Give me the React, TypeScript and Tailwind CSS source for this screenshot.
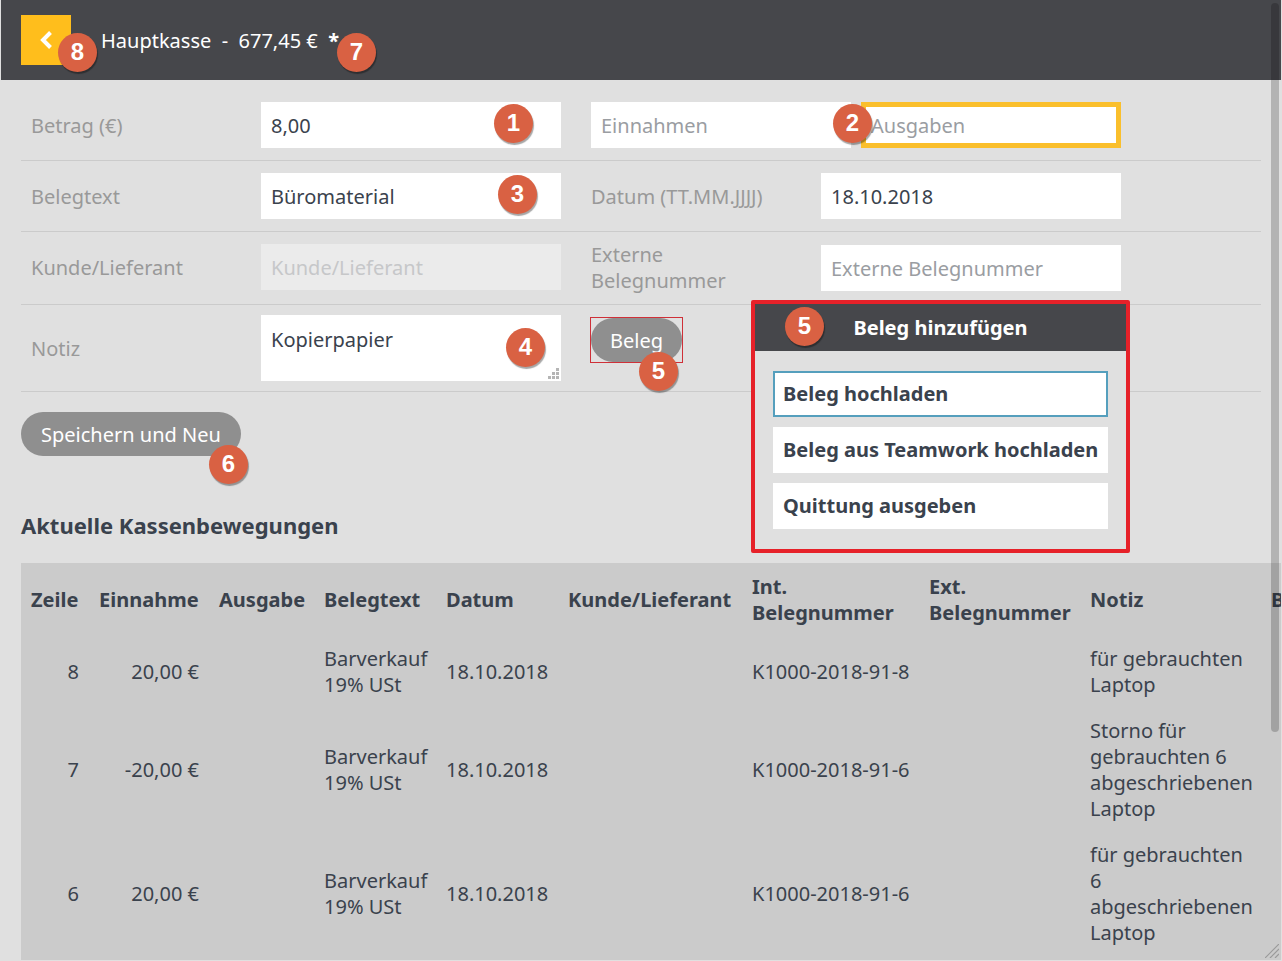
import type { ReactNode } from "react";

function Badge({ n, className }: { n: number; className: string }) {
  return (
    <span
      className={
        "pointer-events-none absolute z-20 flex size-[39px] items-center justify-center rounded-full bg-[#d96143] pb-0.5 font-['Liberation_Sans',sans-serif] text-[24px] leading-6 font-bold text-white shadow-[1px_2px_1px_rgba(0,0,0,0.35)] " +
        className
      }
    >
      {n}
    </span>
  );
}

function Row({ children }: { children: ReactNode }) {
  return (
    <div className="flex items-center border-b border-[#cbcbcb] py-2.5 pl-2.5">{children}</div>
  );
}

const label = "w-[230px] shrink-0 pt-0.5 text-[#999999]";
const field =
  "block h-[46px] w-full bg-white px-2.5 text-[20px] text-[#3a424d] outline-none placeholder:text-[#9a9da2]";
const pill = "block h-11 rounded-full bg-[#8f8f8f] pt-0.5 text-white";

const rows = [
  { zeile: "8", ein: "20,00 €", text: "Barverkauf 19% USt", datum: "18.10.2018", int: "K1000-2018-91-8", notiz: "für gebrauchten Laptop" },
  { zeile: "7", ein: "-20,00 €", text: "Barverkauf 19% USt", datum: "18.10.2018", int: "K1000-2018-91-6", notiz: "Storno für gebrauchten 6 abgeschriebenen Laptop" },
  { zeile: "6", ein: "20,00 €", text: "Barverkauf 19% USt", datum: "18.10.2018", int: "K1000-2018-91-6", notiz: "für gebrauchten 6 abgeschriebenen Laptop" },
];

const th = "px-2.5 pt-[11px] pb-[9px] text-left font-bold";
const td = "px-2.5 pt-[11px] pb-[9px]";

function UploadDialog() {
  return (
    <section
      aria-labelledby="dlg"
      className="absolute top-[220px] left-[750px] z-10 w-[379px] rounded-[2px] border-4 border-[#e62129] bg-[#e0e0e0] pb-5"
    >
      <header className="relative flex h-[47px] items-center justify-center bg-[#46474b] text-white">
        <Badge n={5} className="top-[3px] left-[30px]" />
        <h2 id="dlg" className="font-bold">Beleg hinzufügen</h2>
      </header>
      <div className="flex flex-col gap-2.5 px-[18px] pt-5 font-bold">
        <button className="h-[46px] border-2 border-[#559fbd] bg-white px-2 text-left">Beleg hochladen</button>
        <button className="h-[46px] bg-white px-2.5 text-left whitespace-nowrap">Beleg aus Teamwork hochladen</button>
        <button className="h-[46px] bg-white px-2.5 text-left">Quittung ausgeben</button>
      </div>
    </section>
  );
}

export default function App() {
  return (
    <div className="relative flex h-screen flex-col overflow-hidden border-x border-b border-[#e0e0e0] bg-[#e0e0e0] font-['Noto_Sans',sans-serif] text-[20px] leading-[26px] text-[#3a424d]">
      <header className="flex h-20 shrink-0 items-center bg-[#46474b] pl-5 text-white">
        <div className="relative">
          <button aria-label="Zurück" className="flex size-[50px] items-center justify-center bg-[#ffbe1c]">
            <svg viewBox="0 0 12 18" className="h-[18px] w-3" fill="none" stroke="white" strokeWidth="4">
              <path d="M10.5 1.5 3 9l7.5 7.5" />
            </svg>
          </button>
          <Badge n={8} className="top-[18px] left-[37px]" />
        </div>
        <h1 className="relative ml-[30px] pt-0.5 whitespace-pre">
          Hauptkasse{"  -  "}677,45 €{"  "}
          <b>*</b>
          <Badge n={7} className="top-[7px] -right-[37px]" />
        </h1>
      </header>

      <main className="relative flex min-h-0 flex-1 flex-col pt-2.5 pl-5">
        <form className="mr-5 shrink-0">
          <Row>
            <label htmlFor="betrag" className={label}>Betrag (€)</label>
            <div className="relative my-0.5 w-[300px]">
              <input id="betrag" defaultValue="8,00" className={field} />
              <Badge n={1} className="top-0.5 right-7" />
            </div>
            <div className="ml-[30px] w-[260px]">
              <input aria-label="Einnahmen" placeholder="Einnahmen" className={field} />
            </div>
            <div className="relative ml-2.5 w-[260px]">
              <input
                aria-label="Ausgaben"
                placeholder="Ausgaben"
                className="block h-[46px] w-full border-5 border-[#fabf2c] bg-white px-[5px] text-[20px] outline-none placeholder:text-[#9a9da2]"
              />
              <Badge n={2} className="top-0.5 -left-7" />
            </div>
          </Row>
          <Row>
            <label htmlFor="text" className={label}>Belegtext</label>
            <div className="relative my-0.5 w-[300px]">
              <input id="text" defaultValue="Büromaterial" className={field} />
              <Badge n={3} className="top-0.5 right-6" />
            </div>
            <label htmlFor="datum" className={label + " ml-[30px]"}>Datum (TT.MM.JJJJ)</label>
            <div className="w-[300px]">
              <input id="datum" defaultValue="18.10.2018" className={field} />
            </div>
          </Row>
          <Row>
            <label htmlFor="kunde" className="w-[230px] shrink-0 text-[#999999]">Kunde/Lieferant</label>
            <div className="w-[300px] pb-0.5">
              <input
                id="kunde"
                disabled
                placeholder="Kunde/Lieferant"
                className="block h-[46px] w-full bg-[#ebebeb] px-2.5 text-[20px] placeholder:text-[#c6c7c9]"
              />
            </div>
            <label htmlFor="extern" className="ml-[30px] w-[230px] shrink-0 pr-16 text-[#999999]">Externe Belegnummer</label>
            <div className="w-[300px]">
              <input id="extern" placeholder="Externe Belegnummer" className={field} />
            </div>
          </Row>
          <Row>
            <label htmlFor="notiz" className={label}>Notiz</label>
            <div className="relative w-[300px]">
              <textarea
                id="notiz"
                defaultValue="Kopierpapier"
                className="block h-[66px] w-full resize-none bg-white px-2.5 py-3 text-[20px] leading-[26px] outline-none"
              />
              <svg viewBox="0 0 11 11" className="absolute right-0.5 bottom-0.5 size-[11px]" fill="#b5b5b5">
                <path d="M8 0h3v3H8zM4 4h3v3H4zM8 4h3v3H8zM0 8h3v3H0zM4 8h3v3H4zM8 8h3v3H8z" />
              </svg>
              <Badge n={4} className="top-[13px] right-4" />
            </div>
            <div className="relative mb-4 ml-[29px] border border-[#cf3038]">
              <button type="button" className={pill + " px-[19px]"}>Beleg</button>
              <Badge n={5} className="top-[34px] right-1" />
            </div>
          </Row>
          <div className="relative mt-5 w-fit">
            <button type="button" className={pill + " px-5"}>Speichern und Neu</button>
            <Badge n={6} className="top-[33px] -right-[7px]" />
          </div>
        </form>

        <UploadDialog />

        <h2 className="mt-14 shrink-0 text-[22px] font-bold">Aktuelle Kassenbewegungen</h2>
        <div className="mt-[25px] min-h-0 flex-1 overflow-hidden bg-[#cbcbcb]">
          <table className="w-[1340px] table-fixed">
            <colgroup>
              <col className="w-[68px]" />
              <col className="w-[120px]" />
              <col className="w-[105px]" />
              <col className="w-[122px]" />
              <col className="w-[122px]" />
              <col className="w-[184px]" />
              <col className="w-[177px]" />
              <col className="w-[161px]" />
              <col className="w-[181px]" />
              <col />
            </colgroup>
            <thead>
              <tr>
                <th className={th}>Zeile</th>
                <th className={th}>Einnahme</th>
                <th className={th}>Ausgabe</th>
                <th className={th}>Belegtext</th>
                <th className={th}>Datum</th>
                <th className={th}>Kunde/Lieferant</th>
                <th className={th}>Int. Belegnummer</th>
                <th className={th}>Ext. Belegnummer</th>
                <th className={th}>Notiz</th>
                <th className={th}>Beleg</th>
              </tr>
            </thead>
            <tbody>
              {rows.map((r) => (
                <tr key={r.zeile}>
                  <td className={td + " text-right"}>{r.zeile}</td>
                  <td className={td + " text-right whitespace-nowrap"}>{r.ein}</td>
                  <td className={td} />
                  <td className={td}>{r.text}</td>
                  <td className={td}>{r.datum}</td>
                  <td className={td} />
                  <td className={td + " whitespace-nowrap"}>{r.int}</td>
                  <td className={td} />
                  <td className={td}>{r.notiz}</td>
                  <td className={td} />
                </tr>
              ))}
            </tbody>
          </table>
        </div>
      </main>

      <div className="absolute top-[3px] right-0.5 z-30 h-[729px] w-2 rounded-full bg-black/20" />
      <svg viewBox="0 0 14 14" className="absolute right-0.5 bottom-0.5 size-3.5" fill="none" stroke="#9a9a9a" strokeWidth="1.2">
        <path d="M0 14 14 0M5 14l9-9M10 14l4-4" />
      </svg>
    </div>
  );
}
